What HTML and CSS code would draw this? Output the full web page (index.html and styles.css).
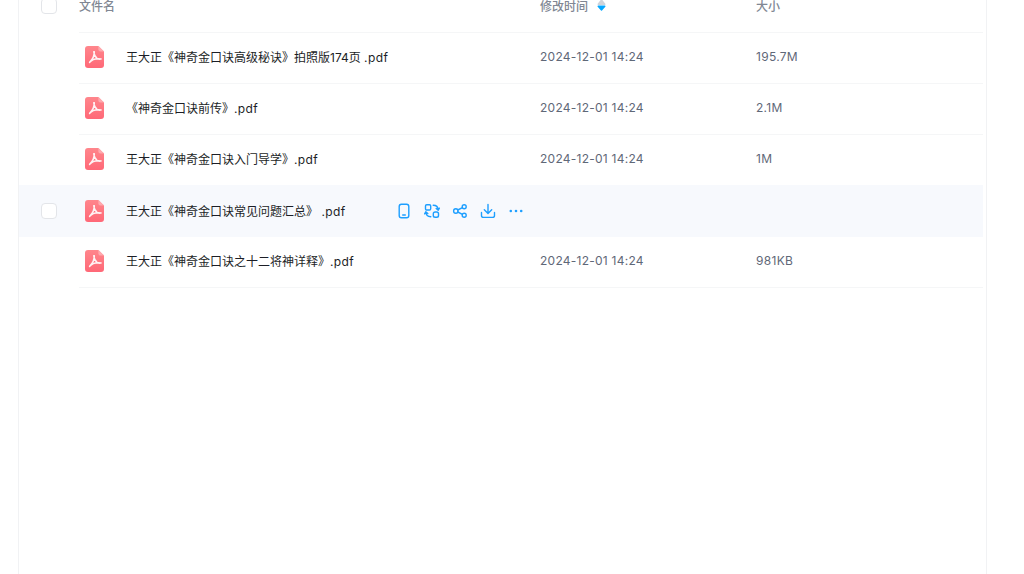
FILE: index.html
```html
<!DOCTYPE html>
<html lang="zh-CN">
<head>
    <meta charset="UTF-8">
    <meta name="viewport" content="width=device-width, initial-scale=1.0">
    <title>文件列表</title>
    <link rel="stylesheet" href="styles.css">
</head>
<body>
    <svg class="defs" width="0" height="0">
        <defs>
            <linearGradient id="pdf-bg" x1="0" y1="0" x2="0" y2="1">
                <stop offset="0" stop-color="#ff868c"/>
                <stop offset="1" stop-color="#ff6877"/>
            </linearGradient>
            <symbol id="pdf" viewBox="0 0 19 22">
                <path d="M3 0h10.400L19 5.600V19a3 3 0 0 1-3 3H3a3 3 0 0 1-3-3V3a3 3 0 0 1 3-3z" fill="url(#pdf-bg)"/>
                <path d="M13.400 0L19 5.600h-3.600a2 2 0 0 1-2-2z" fill="#ffa9ae"/>
                <path d="M8.800 5.800c.3 3 1.700 5.300 3.300 6.500 1.200.8 2.900 1 4 .6M9.300 5.800c.1 3.500-1.500 7.400-4.700 10.600M4.600 16.400c2.200-2.700 6.400-4.200 11.500-3.500" fill="none" stroke="#fff" stroke-opacity=".92" stroke-width="1.500" stroke-linecap="round" stroke-linejoin="round"/>
            </symbol>
        </defs>
    </svg>

    <div class="panel">
        <div class="row head">
            <div class="check-col"><span class="check"></span></div>
            <div class="cols">
                <div class="name-col">文件名</div>
                <div class="time-col">修改时间
                    <svg class="sort" viewBox="0 0 9 12" width="9" height="12">
                        <path d="M4.500 1L7.800 5.200H1.200z" fill="#cfd3da" stroke="#cfd3da" stroke-width="1.400" stroke-linejoin="round"/>
                        <path d="M1.200 7.200h6.600L4.500 11z" fill="#06a7ff" stroke="#06a7ff" stroke-width="1.400" stroke-linejoin="round"/>
                    </svg>
                </div>
                <div class="size-col">大小</div>
            </div>
        </div>

        <div class="row">
            <div class="check-col"></div>
            <div class="cols">
                <div class="name-col">
                    <svg class="pdf-icon"><use href="#pdf"/></svg>
                    <span class="file-name">王大正《神奇金口诀高级秘诀》拍照版174页 <span class="ext">.pdf</span></span>
                </div>
                <div class="time-col">2024-12-01 14:24</div>
                <div class="size-col">195.7M</div>
            </div>
        </div>

        <div class="row">
            <div class="check-col"></div>
            <div class="cols">
                <div class="name-col">
                    <svg class="pdf-icon"><use href="#pdf"/></svg>
                    <span class="file-name">《神奇金口诀前传》<span class="ext">.pdf</span></span>
                </div>
                <div class="time-col">2024-12-01 14:24</div>
                <div class="size-col">2.1M</div>
            </div>
        </div>

        <div class="row">
            <div class="check-col"></div>
            <div class="cols">
                <div class="name-col">
                    <svg class="pdf-icon"><use href="#pdf"/></svg>
                    <span class="file-name">王大正《神奇金口诀入门导学》<span class="ext">.pdf</span></span>
                </div>
                <div class="time-col">2024-12-01 14:24</div>
                <div class="size-col">1M</div>
            </div>
        </div>

        <div class="row hover">
            <div class="check-col"><span class="check"></span></div>
            <div class="cols">
                <div class="name-col">
                    <svg class="pdf-icon"><use href="#pdf"/></svg>
                    <span class="file-name">王大正《神奇金口诀常见问题汇总》 <span class="ext">.pdf</span></span>
                    <div class="actions">
                        <svg viewBox="0 0 16 16" width="16" height="16"><rect x="3.200" y="1.200" width="9.600" height="13.600" rx="2.200"/><path d="M6.700 12h2.600"/></svg>
                        <svg viewBox="0 0 16 16" width="16" height="16"><rect x="1.500" y="1.800" width="5.200" height="5.200" rx="1.200"/><rect x="9.300" y="9" width="5.200" height="5.200" rx="1.800"/><path d="M9.200 2.300c2.800 0 4.800 1 5 4.700M12.200 5.500l2 1.700 1.200-2M6.800 13.700c-2.800 0-4.800-1-5-4.700M3.800 10.500L1.800 8.800.6 10.800"/></svg>
                        <svg viewBox="0 0 16 16" width="16" height="16"><circle cx="3.800" cy="8" r="2.200"/><circle cx="12.200" cy="3.800" r="2"/><circle cx="12.200" cy="12.200" r="2"/><path d="M5.800 7l4.600-2.300M5.800 9l4.600 2.300"/></svg>
                        <svg viewBox="0 0 16 16" width="16" height="16"><path d="M8 1.500v8.800M4.300 6.800L8 10.500l3.700-3.700M1.500 9.500v2.900a2 2 0 0 0 2 2h9a2 2 0 0 0 2-2V9.500"/></svg>
                        <svg viewBox="0 0 16 16" width="16" height="16"><circle class="dot" cx="2.800" cy="8" r="1.300"/><circle class="dot" cx="8" cy="8" r="1.300"/><circle class="dot" cx="13.200" cy="8" r="1.300"/></svg>
                    </div>
                </div>
                <div class="time-col"></div>
                <div class="size-col"></div>
            </div>
        </div>

        <div class="row">
            <div class="check-col"></div>
            <div class="cols">
                <div class="name-col">
                    <svg class="pdf-icon"><use href="#pdf"/></svg>
                    <span class="file-name">王大正《神奇金口诀之十二将神详释》<span class="ext">.pdf</span></span>
                </div>
                <div class="time-col">2024-12-01 14:24</div>
                <div class="size-col">981KB</div>
            </div>
        </div>
    </div>
</body>
</html>
```

FILE: styles.css
```css
html, body {
    height: 100%;
}
body {
    margin: 0;
    overflow: hidden;
    background-color: #fff;
    font-family: Inter, "Noto Sans CJK SC", sans-serif;
    font-size: 12px;
    color: #1c1e26;
}
.defs {
    display: block;
    height: 0;
}
/* list is scrolled, the header is cut by the window top */
.panel {
    box-sizing: border-box;
    width: 969px;
    height: 620px;
    margin: -18px 0 0 18px;
    padding-right: 3px;
    border-left: 1px solid #f1f2f4;
    border-right: 1px solid #f1f2f4;
}
.row {
    display: flex;
    height: 51px;
}
.check-col {
    display: flex;
    align-items: center;
    width: 60px;
    padding-left: 22px;
    box-sizing: border-box;
}
.check {
    box-sizing: border-box;
    width: 16px;
    height: 16px;
    background: #fff;
    border: 1px solid #e3e5e9;
    border-radius: 4px;
}
.cols {
    display: flex;
    flex: 1;
    align-items: center;
    padding-bottom: 4px;
    border-bottom: 1px solid #f5f6f7;
}
.name-col {
    display: flex;
    align-items: center;
    width: 461px;
}
.time-col {
    display: flex;
    align-items: center;
    gap: 9px;
    width: 216px;
    color: #5f6878;
    letter-spacing: .25px;
}
.size-col {
    color: #5f6878;
    letter-spacing: .3px;
}
.head .check-col {
    padding-bottom: 3px;
}
.head .cols {
    font-weight: 500;
}
.head .name-col,
.head .time-col,
.head .size-col {
    color: #818793;
    letter-spacing: 0;
}
.row:has(+ .hover) .cols {
    border-bottom-color: transparent;
}
.hover {
    height: 52px;
    margin-top: -1px;
    background-color: #f7f9fd;
}
.hover .cols {
    padding-bottom: 2px;
    border-bottom: 0;
}
.pdf-icon {
    width: 19px;
    height: 22px;
    margin: 2px 22px 0 6px;
    flex-shrink: 0;
}
.file-name {
    white-space: nowrap;
}
.ext {
    letter-spacing: .4px;
}
.actions {
    display: flex;
    align-items: center;
    gap: 12px;
    margin: 2px 0 0 50px;
}
.actions svg {
    fill: none;
    stroke: #1e9fff;
    stroke-width: 1.4;
    stroke-linecap: round;
    stroke-linejoin: round;
}
.actions .dot {
    fill: #1e9fff;
    stroke: none;
}
```
